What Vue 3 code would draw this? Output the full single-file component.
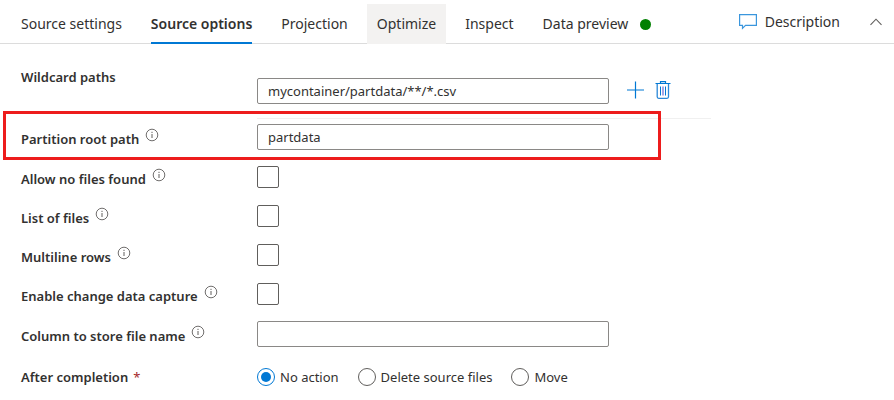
<script setup>
import { ref } from 'vue'

const tabs = [
  { id: 'settings', label: 'Source settings' },
  { id: 'options', label: 'Source options' },
  { id: 'projection', label: 'Projection' },
  { id: 'optimize', label: 'Optimize', hovered: true },
  { id: 'inspect', label: 'Inspect' },
  { id: 'preview', label: 'Data preview', status: true },
]
const activeTab = ref('options')

const wildcardPath = ref('mycontainer/partdata/**/*.csv')
const rootPath = ref('partdata')
const fileNameColumn = ref('')

const flags = ref([
  { id: 'allow-none', label: 'Allow no files found', value: false },
  { id: 'file-list', label: 'List of files', value: false },
  { id: 'multiline', label: 'Multiline rows', value: false },
  { id: 'cdc', label: 'Enable change data capture', value: false },
])

const completionOptions = [
  { id: 'none', label: 'No action' },
  { id: 'delete', label: 'Delete source files' },
  { id: 'move', label: 'Move' },
]
const completion = ref('none')
</script>

<template>
  <main class="panel">
    <header class="bar">
      <nav class="tabs" role="tablist">
        <button
          v-for="tab in tabs"
          :key="tab.id"
          type="button"
          role="tab"
          class="tab"
          :class="{ active: tab.id === activeTab, hovered: tab.hovered }"
          :aria-selected="tab.id === activeTab"
          @click="activeTab = tab.id"
        >
          <span class="tab-text">{{ tab.label }}</span>
          <span v-if="tab.status" class="status"></span>
        </button>
      </nav>
      <div class="actions">
        <button type="button" class="description">
          <svg class="comment" width="18" height="16" viewBox="0 0 18 16" aria-hidden="true">
            <path d="M0.6 0.6H17.4V11.4H6.5L3.5 14.4V11.4H0.6Z" fill="none" stroke="#3a96dd" stroke-width="1.2" />
          </svg>
          Description
        </button>
        <button type="button" class="collapse" aria-label="Collapse">
          <svg width="12" height="8" viewBox="0 0 12 8" aria-hidden="true">
            <path d="M0.5 6.8L6 1.2L11.5 6.8" fill="none" stroke="#605e5c" stroke-width="1.1" />
          </svg>
        </button>
      </div>
    </header>

    <form class="form" @submit.prevent>
      <div class="row wildcard">
        <label class="label" for="wildcard">Wildcard paths</label>
        <div class="paths">
          <input id="wildcard" v-model="wildcardPath" class="text" type="text" />
          <button type="button" class="icon-button add" aria-label="Add path">
            <svg width="18" height="18" viewBox="0 0 18 18" aria-hidden="true">
              <path d="M8.5 0.5V17.5M0 9H17" fill="none" stroke="#0078d4" stroke-width="1.2" />
            </svg>
          </button>
          <button type="button" class="icon-button" aria-label="Delete path">
            <svg width="16" height="18" viewBox="0 0 16 18" aria-hidden="true">
              <path d="M0.5 2.5H15.5M5.5 2.5V0.6H10.5V2.5" fill="none" stroke="#0078d4" stroke-width="1.2" />
              <path d="M2.2 3V15.8Q2.2 17.3 3.7 17.3H12Q13.5 17.3 13.5 15.8V3" fill="none" stroke="#2b88d8" stroke-width="1.3" />
              <path d="M5.5 5.5V14.5M10.5 5.5V14.5" fill="none" stroke="#0078d4" />
              <path d="M8 5.5V14.5" fill="none" stroke="#8f8fe0" stroke-width="1.6" />
            </svg>
          </button>
        </div>
      </div>

      <div class="row highlighted">
        <label class="label" for="root-path">
          Partition root path
          <svg class="info" width="14" height="14" viewBox="0 0 14 14" aria-hidden="true">
            <circle cx="7" cy="7" r="5.8" fill="none" stroke="#605e5c" stroke-width="0.9" />
            <path d="M7 6V10M7 3.8V5" fill="none" stroke="#605e5c" />
          </svg>
        </label>
        <input id="root-path" v-model="rootPath" class="text" type="text" />
      </div>

      <div v-for="flag in flags" :key="flag.id" class="row">
        <label class="label" :for="flag.id">
          {{ flag.label }}
          <svg class="info" width="14" height="14" viewBox="0 0 14 14" aria-hidden="true">
            <circle cx="7" cy="7" r="5.8" fill="none" stroke="#605e5c" stroke-width="0.9" />
            <path d="M7 6V10M7 3.8V5" fill="none" stroke="#605e5c" />
          </svg>
        </label>
        <input :id="flag.id" v-model="flag.value" class="check" type="checkbox" />
      </div>

      <div class="row column-name">
        <label class="label" for="file-column">
          Column to store file name
          <svg class="info" width="14" height="14" viewBox="0 0 14 14" aria-hidden="true">
            <circle cx="7" cy="7" r="5.8" fill="none" stroke="#605e5c" stroke-width="0.9" />
            <path d="M7 6V10M7 3.8V5" fill="none" stroke="#605e5c" />
          </svg>
        </label>
        <input id="file-column" v-model="fileNameColumn" class="text" type="text" />
      </div>

      <div class="row completion" role="radiogroup" aria-labelledby="completion-label">
        <span id="completion-label" class="caption">After completion <span class="required">*</span></span>
        <div class="radios">
          <label v-for="option in completionOptions" :key="option.id" class="radio-label">
            <input v-model="completion" class="radio" type="radio" name="completion" :value="option.id" />
            {{ option.label }}
          </label>
        </div>
      </div>
    </form>
  </main>
</template>

<style>
body {
  margin: 0;
  background: #fff;
}
</style>

<style scoped>
.panel {
  font-family: "Segoe UI", "Noto Sans", "Open Sans", sans-serif;
  font-size: 13px;
  line-height: 20px;
  color: #323130;
}

button,
input {
  box-sizing: border-box;
  margin: 0;
  font: inherit;
  color: inherit;
}

button {
  padding: 0;
  border: 0;
  background: none;
  cursor: pointer;
}

svg {
  display: block;
}

.bar {
  display: flex;
  justify-content: space-between;
  padding: 4px 12px 0 11px;
  box-shadow: inset 0 -1px #dcdcdc;
}

.tabs {
  display: flex;
  gap: 9px;
}

.tab {
  display: flex;
  align-items: center;
  gap: 12px;
  height: 40px;
  padding: 0 10px;
  font-size: 14px;
  white-space: nowrap;
}

.tab-text {
  display: flex;
  align-items: center;
  height: 40px;
  box-sizing: border-box;
}

.tab.active {
  font-weight: 600;
}

.tab.active .tab-text {
  box-shadow: inset 0 -2px #0078d4;
}

.tab.hovered {
  background: #f3f2f1;
}

.status {
  width: 11px;
  height: 11px;
  border-radius: 50%;
  background: #008000;
}

.actions {
  display: flex;
  align-items: center;
  gap: 30px;
  height: 36px;
}

.description {
  display: flex;
  align-items: center;
  gap: 8px;
  font-size: 14px;
}

.form {
  padding: 0 21px;
}

.row {
  display: grid;
  grid-template-columns: 236px minmax(0, 1fr);
  align-items: center;
  min-height: 39px;
}

.wildcard {
  align-items: start;
  min-height: 75px;
}

.wildcard .label {
  padding-top: 23px;
}

.paths {
  display: flex;
  align-items: center;
  box-sizing: border-box;
  max-width: 454px;
  height: 75px;
  padding-top: 20px;
  border-bottom: 1px solid #f0f0f0;
}

.highlighted {
  position: relative;
  min-height: 36px;
  margin-bottom: 2px;
}

.highlighted::after {
  content: "";
  position: absolute;
  top: -8px;
  left: -18px;
  width: 652px;
  height: 43px;
  border: 3px solid #ed1c1c;
  pointer-events: none;
}

.column-name {
  min-height: 42px;
}

.completion {
  min-height: 44px;
}

.label,
.caption {
  display: flex;
  gap: 5px;
  font-weight: 600;
}

.label {
  gap: 6px;
  padding-top: 4px;
}

.info {
  margin-top: -1px;
}

.required {
  font-weight: 400;
  color: #a4262c;
}

.text {
  width: 100%;
  max-width: 352px;
  height: 26px;
  padding: 0 10px;
  border: 1px solid #8a8886;
  border-radius: 2px;
  background: #fff;
}

.icon-button {
  flex: none;
  margin-bottom: 3px;
}

.add {
  margin-right: 10px;
  margin-left: 18px;
}

.check {
  appearance: none;
  width: 22px;
  height: 22px;
  border: 1px solid #605e5c;
  border-radius: 2px;
  background: #fff;
}

.check:checked {
  background: #0078d4;
}

.radios {
  display: flex;
  gap: 19px;
}

.radio-label {
  display: flex;
  align-items: center;
  gap: 5px;
}

.radio {
  appearance: none;
  width: 18px;
  height: 18px;
  border: 1px solid #605e5c;
  border-radius: 50%;
  background: #fff;
}

.radio:checked {
  padding: 3px;
  border-color: #0078d4;
  background: #0078d4 content-box;
}
</style>
